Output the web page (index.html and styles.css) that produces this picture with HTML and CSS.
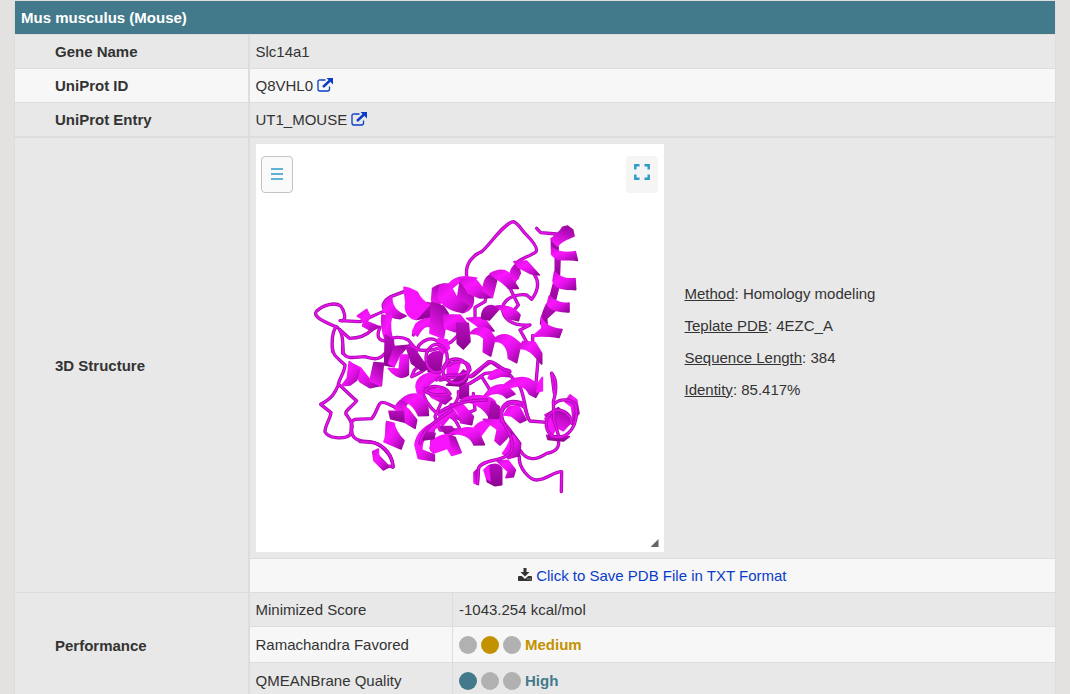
FILE: index.html
```html
<!DOCTYPE html>
<html lang="en">
<head>
    <meta charset="UTF-8">
    <meta name="viewport" content="width=device-width, initial-scale=1.0">
    <title>Mus musculus (Mouse) - Slc14a1</title>
    <link rel="stylesheet" href="styles.css">
</head>
<body>
    <!-- shared icons -->
    <svg class="sprite" aria-hidden="true">
        <symbol id="icon-external" viewBox="0 0 16 15">
            <path d="M8.500 2H3.500A2 2 0 0 0 1 4.500V11a2 2 0 0 0 2 2h7.500a2 2 0 0 0 2-2V8.500" fill="none" stroke="currentColor" stroke-width="1.300"/>
            <path d="M6 9L13 2.500" stroke="currentColor" stroke-width="2.400"/>
            <path d="M9.500 0H16v6.500z" fill="currentColor"/>
        </symbol>
    </svg>

    <table class="protein-table">
        <colgroup>
            <col class="col-label">
            <col class="col-name">
            <col>
        </colgroup>
        <thead>
            <tr>
                <th class="species" colspan="3">Mus musculus (Mouse)</th>
            </tr>
        </thead>
        <tbody>
            <tr>
                <th scope="row">Gene Name</th>
                <td class="first" colspan="2">Slc14a1</td>
            </tr>
            <tr class="light">
                <th scope="row">UniProt ID</th>
                <td class="first" colspan="2">Q8VHL0 <a href="#" aria-label="Open Q8VHL0"><svg class="icon-external"><use href="#icon-external"/></svg></a></td>
            </tr>
            <tr>
                <th scope="row">UniProt Entry</th>
                <td class="first" colspan="2">UT1_MOUSE <a href="#" aria-label="Open UT1_MOUSE"><svg class="icon-external"><use href="#icon-external"/></svg></a></td>
            </tr>
            <tr class="structure-row">
                <th scope="row" rowspan="2">3D Structure</th>
                <td class="first" colspan="2">
                    <div class="structure">
                        <div class="viewer">
                            <div class="viewer-tools">
                                <button class="tool tool-menu" type="button" aria-label="Menu">
                                    <svg width="12" height="12" viewBox="0 0 12 12"><path d="M0 1h12M0 6h12M0 11h12" stroke="#2b9cc8" stroke-width="1.500"/></svg>
                                </button>
                                <button class="tool" type="button" aria-label="Full screen">
                                    <svg width="16" height="16" viewBox="0 0 16 16"><path d="M1.300 5.500V1.300H5.500M10.500 1.300h4.200V5.500M14.700 10.500v4.200H10.500M5.500 14.700H1.300V10.500" fill="none" stroke="#2b9cc8" stroke-width="2.400"/></svg>
                                </button>
                            </div>
                            <svg class="model" viewBox="0 0 1224 1224" role="img" aria-label="3D model">
                                <defs>
                                    <linearGradient id="g1" x1="0" y1="0" x2="1" y2="1">
                                        <stop offset="0" stop-color="#d00ed6"/>
                                        <stop offset="0.350" stop-color="#fb16ff"/>
                                        <stop offset="0.600" stop-color="#e010e6"/>
                                        <stop offset="1" stop-color="#8e0694"/>
                                    </linearGradient>
                                    <linearGradient id="g2" x1="0" y1="1" x2="0.500" y2="0">
                                        <stop offset="0" stop-color="#ff1cff"/>
                                        <stop offset="0.500" stop-color="#d40fda"/>
                                        <stop offset="1" stop-color="#a009a6"/>
                                    </linearGradient>
                                    <linearGradient id="g3" x1="0" y1="0" x2="0" y2="1">
                                        <stop offset="0" stop-color="#b80bbe"/>
                                        <stop offset="1" stop-color="#8c0592"/>
                                    </linearGradient>
                                    <g id="coil-back">
                                        <!-- left loops -->
                                        <g transform="translate(132 198)">
                                            <path d="M128 332C140 325 132 300 122 288C105 275 70 285 50 303C38 318 60 330 112 352"/>
                                            <path d="M120 332L180 335C210 325 230 310 255 303"/>
                                            <path d="M118 358L148 385C180 385 200 375 215 360"/>
                                            <path d="M108 350C95 370 95 400 98 425"/>
                                            <path d="M118 358C130 375 130 400 128 430"/>
                                            <path d="M255 300C240 285 258 265 280 257L312 245"/>
                                            <path d="M240 352C230 375 232 390 255 393C275 380 305 378 325 390L350 420"/>
                                        </g>
                                        <g transform="translate(132 588)">
                                            <path d="M97 20C95 45 115 55 135 75C135 95 120 110 115 132L170 183C150 205 130 215 140 225C155 245 160 260 155 270C155 300 180 305 210 305C240 310 275 340 280 380L262 378L235 350"/>
                                            <path d="M128 20L130 40C140 60 170 50 195 50C215 55 235 65 255 40"/>
                                            <path d="M115 135C105 160 95 175 62 193L93 218C90 240 75 255 75 275C85 295 130 300 150 285C160 265 145 245 165 238L215 236C230 220 235 185 247 187C265 188 280 200 300 210"/>
                                        </g>
                                        <!-- top loops -->
                                        <g transform="translate(522 198)">
                                            <path d="M320 55L332 68L380 72"/>
                                            <path d="M110 198C105 160 130 135 155 125C180 105 220 40 250 35C265 40 275 60 285 70C310 95 325 115 318 125C300 140 270 145 262 158L268 190L240 235L265 285L245 310"/>
                                            <path d="M312 192C325 210 330 235 305 268L290 255C260 250 225 265 218 290C215 320 240 350 300 345L270 360L295 405"/>
                                            <path d="M135 325L135 292L165 275L168 260"/>
                                            <path d="M308 400L308 376"/>
                                        </g>
                                        <!-- right loops -->
                                        <g transform="translate(522 588)">
                                            <path d="M324 60L318 130"/>
                                            <path d="M270 140C290 190 285 230 300 243L360 248"/>
                                            <path d="M385 300C390 325 375 335 350 340C320 360 290 365 270 330"/>
                                            <path d="M268 350C265 385 300 420 320 420C350 420 370 395 395 395L394 455"/>
                                            <path d="M125 110C150 95 165 70 185 67L240 105L270 140"/>
                                            <path d="M120 130L165 100L225 95"/>
                                        </g>
                                        <!-- core -->
                                        <g transform="translate(312 378)">
                                            <path d="M160 195C170 160 205 145 235 155"/>
                                            <path d="M150 225C170 245 200 245 235 235L275 215L300 190"/>
                                            <path d="M165 255C175 205 225 190 245 230C235 275 190 305 155 320C160 300 170 290 185 290"/>
                                            <path d="M190 375C200 400 225 435 250 435C280 410 300 390 295 365"/>
                                            <path d="M240 330L290 320L320 345L365 320L390 360L370 385"/>
                                            <path d="M245 395L225 440L240 480L300 480"/>
                                            <path d="M300 480C290 450 270 430 250 440C215 460 215 500 215 540"/>
                                            <path d="M340 370L345 420L320 430"/>
                                        </g>
                                    </g>
                                    <g id="coil-front">
                                        <g transform="translate(312 378)">
                                            <ellipse cx="230" cy="265" rx="32" ry="42"/>
                                            <ellipse cx="287" cy="303" rx="38" ry="36"/>
                                            <path d="M230 330C270 300 300 330 330 300C330 270 290 270 265 285"/>
                                            <path d="M195 362C215 340 260 350 270 372C240 375 215 380 195 362"/>
                                            <path d="M240 425C280 400 320 390 380 390"/>
                                            <path d="M330 320L385 275C405 270 420 300 450 305"/>
                                            <path d="M180 520C190 470 235 450 275 420"/>
                                            <path d="M425 455C415 400 445 385 490 400L505 445"/>
                                            <path d="M0 515L40 518C75 525 100 560 98 592"/>
                                        </g>
                                        <g transform="translate(522 588)">
                                            <path d="M365 100C382 120 380 150 370 185L372 240L385 285"/>
                                            <path d="M365 100L373 160"/>
                                            <path d="M375 190C390 175 430 175 438 200C445 250 420 300 370 290C335 270 345 215 385 210C415 215 425 235 425 250"/>
                                            <path d="M280 200C260 180 215 190 215 225C215 260 255 280 245 330C235 365 160 355 146 383L142 430"/>
                                        </g>
                                    </g>
                                </defs>

                                <g class="coil-dark"><use href="#coil-back"/></g>
                                <g class="coil-light"><use href="#coil-back"/></g>

                                <g class="ribbons">
                                    <!-- upper left helix -->
                                    <g transform="translate(132 198)">
                                        <path class="r1" d="M172 318L200 298L210 318L202 335L238 350L215 362L188 348L192 330Z"/>
                                        <path class="r1" d="M250 302C255 275 262 265 275 262C275 300 300 310 318 318L300 326C280 325 265 320 250 302Z"/>
                                        <path class="r3" d="M380 278L430 288L445 312L405 318L350 328Z"/>
                                        <path class="r4" d="M312 232L330 236L352 247C360 265 370 275 388 285L348 328C325 325 312 300 318 280Z"/>
                                        <path class="r1" d="M246 315L275 318C265 350 275 380 285 420L262 425C262 390 240 370 246 315Z"/>
                                    </g>
                                    <g transform="translate(312 378)">
                                        <path class="r3" d="M76 195L100 210L102 290L74 285Z"/>
                                        <path class="r2" d="M104 230L145 226L118 258L102 290L86 280Z"/>
                                        <path class="r1" d="M122 255L145 255L145 314C130 328 105 322 85 295L118 298Z"/>
                                        <path class="r3" d="M138 228L165 240L190 275L215 290L185 302L155 280Z"/>
                                        <path class="r1" d="M-30 278L2 294L30 330L62 346L30 353L0 335L-18 300Z"/>
                                        <path class="r2" d="M42 278L70 280L64 348L30 332Z"/>
                                        <path class="r1" d="M-32 275L-2 300L-10 330L-30 345L-55 347L-38 325Z"/>
                                    </g>

                                    <!-- upper helix -->
                                    <g transform="translate(312 378)">
                                        <path class="r2" d="M218 55C235 42 260 38 270 48C255 75 245 95 232 112L215 92Z"/>
                                        <path class="r1" d="M262 48C280 20 310 15 350 25L335 35L300 35L275 55Z"/>
                                        <path class="r2" d="M300 38L338 72C345 100 335 125 305 128L290 100Z"/>
                                        <path class="r1" d="M240 45L268 42L292 85L325 108L310 127C275 125 245 105 232 80Z"/>
                                        <path class="r1" d="M300 28C330 20 350 25 360 45L397 82L360 84L325 70C315 50 305 40 300 28Z"/>
                                        <path class="r2" d="M370 62C370 30 380 15 400 12L410 30L397 82Z"/>
                                        <path class="r1" d="M390 12C410 0 430 -2 445 8L475 55L445 55C430 35 412 28 390 12Z"/>
                                        <path class="r2" d="M450 12C455 -10 468 -20 480 -22L475 25L465 32Z"/>
                                        <path class="r1" d="M462 -25L500 -27L538 15L510 10L475 -8Z"/>
                                    </g>

                                    <!-- second helix -->
                                    <g transform="translate(312 378)">
                                        <path class="r1" d="M168 162C190 142 220 140 230 155L245 180L225 180C205 160 190 165 172 198L158 185Z"/>
                                        <path class="r2" d="M215 98L240 105L262 135L250 205L210 190Z"/>
                                        <path class="r1" d="M250 135L300 135L320 160L322 180L285 185L255 175Z"/>
                                        <path class="r3" d="M290 160L325 160L330 215L310 237L292 220Z"/>
                                        <path class="r1" d="M320 145L370 142L402 183L372 182Z"/>
                                        <path class="r3" d="M365 145C365 122 375 108 395 107L420 114L388 150Z"/>
                                        <path class="r1" d="M330 190C345 172 365 168 388 180L405 205L392 258L370 245L372 205C355 190 345 190 330 190Z"/>
                                        <path class="r1" d="M402 215C405 192 440 188 462 205L482 222L470 278L445 265C445 235 430 210 402 215Z"/>
                                        <path class="r1" d="M480 235L488 215L525 217L545 250L545 282C525 260 510 235 480 235Z"/>
                                        <path class="r1" d="M410 108C440 105 465 115 480 135L475 152L440 144L430 125Z"/>
                                        <path class="r4" d="M235 205L262 210L268 235L250 250L235 235Z"/>
                                    </g>

                                    <!-- core -->
                                    <g transform="translate(312 378)">
                                        <path class="r3" d="M200 270C210 245 230 240 248 252L240 310L205 305Z"/>
                                        <path class="r1" d="M168 350C170 320 200 305 240 308L240 325C215 330 200 345 192 378L172 368Z"/>
                                        <path class="r1" d="M192 352L250 360L275 385L255 402L215 382Z"/>
                                        <path class="r3" d="M300 350L325 345L325 382L300 385Z"/>
                                        <path class="r4" d="M262 278L300 280L290 315L262 322Z"/>
                                        <path class="r3" d="M310 300C330 310 330 335 300 348L260 345L290 325Z"/>
                                        <path class="r1" d="M385 325C392 298 425 290 450 300L448 320L425 318L395 328Z"/>
                                        <path class="r1" d="M378 380C385 348 420 340 440 347L465 372L440 384C425 365 400 365 378 380Z"/>
                                        <path class="r1" d="M428 350C450 322 490 318 510 328L545 350L527 382L508 372C498 348 480 342 455 352Z"/>
                                        <path class="r4" d="M535 340L547 322L547 362L530 366Z"/>
                                    </g>

                                    <!-- lower helices -->
                                    <g transform="translate(312 378)">
                                        <path class="r2" d="M105 418C110 388 145 378 170 376L140 402L130 425Z"/>
                                        <path class="r1" d="M125 388C145 372 165 370 180 375L203 405L205 436L176 437C165 410 150 400 125 388Z"/>
                                        <path class="r1" d="M122 400L145 418L170 450L165 475L132 455Z"/>
                                        <path class="r3" d="M87 424L130 425L132 456L92 446Z"/>
                                        <path class="r1" d="M80 455L102 460C105 485 120 500 132 512L123 537L72 515C82 495 75 475 80 455Z"/>
                                        <path class="r1" d="M38 545L55 537C52 560 65 580 85 592L70 600L42 572Z"/>
                                        <path class="r1" d="M300 392C330 370 390 375 405 395L420 440L388 442C370 410 340 395 300 392Z"/>
                                        <path class="r3" d="M395 395L418 410L415 465L385 455Z"/>
                                        <path class="r1" d="M270 402L305 400L340 440L335 464L302 458C300 430 290 415 270 402Z"/>
                                        <path class="r1" d="M235 430L275 410L300 450L270 440L245 470Z"/>
                                        <path class="r3" d="M240 470L275 470L290 490L262 498Z"/>
                                        <path class="r4" d="M332 490C350 455 370 450 395 455L360 500Z"/>
                                        <path class="r3" d="M420 440L445 470L482 520L478 558L445 562L460 515L425 475Z"/>
                                        <path class="r1" d="M370 448L425 450L452 480L440 505L420 525L405 512L412 478Z"/>
                                        <path class="r1" d="M270 490C310 470 340 468 355 485L373 524L342 525C335 505 320 490 270 490Z"/>
                                        <path class="r4" d="M215 515C235 495 260 492 275 495L303 548L275 556L262 535L220 550L210 535Z"/>
                                        <path class="r2" d="M268 498L285 502L303 546L280 552Z"/>
                                        <path class="r1" d="M165 525C168 490 200 460 240 455L238 468C205 485 185 505 185 540L223 555L223 573L175 565Z"/>
                                        <path class="r3" d="M190 485L225 490L222 505L190 510Z"/>
                                        <path class="r1" d="M432 435L445 412L475 405L498 450L480 458L455 438Z"/>
                                    </g>

                                    <!-- right helix -->
                                    <g transform="translate(522 198)">
                                        <path class="r3" d="M364 85L384 100L384 132L365 118Z"/>
                                        <path class="r2" d="M364 88C375 72 390 70 398 52L412 48L428 60L432 78C415 85 395 90 382 108Z"/>
                                        <path class="r3" d="M376 145L390 150L388 200L376 195Z"/>
                                        <path class="r1" d="M365 112C390 132 415 128 436 125L442 151C415 145 382 158 365 133Z"/>
                                        <path class="r3" d="M370 222L386 232L374 280L358 270Z"/>
                                        <path class="r1" d="M374 185C390 207 415 208 435 206L437 239C410 236 374 240 369 212Z"/>
                                        <path class="r3" d="M350 282L378 300L350 325L352 355L332 342C332 320 340 305 350 282Z"/>
                                        <path class="r1" d="M358 258C375 278 400 282 417 279L417 306C390 303 365 304 352 282Z"/>
                                        <path class="r1" d="M334 322C345 350 370 357 396 359L387 382C360 378 330 375 308 380L336 355Z"/>
                                    </g>

                                    <!-- right and bottom clusters -->
                                    <g transform="translate(522 588)">
                                        <path class="r2" d="M345 225L385 203L425 245L400 272L365 255Z"/>
                                        <path class="r1" d="M420 165L440 180L447 220L430 242L425 200L405 185Z"/>
                                        <path class="r3" d="M350 286L418 290L400 303L354 298Z"/>
                                        <path class="r4" d="M345 235L360 235L375 270L365 290L355 260Z"/>
                                        <path class="r1" d="M218 340C235 320 240 300 248 285L270 312L268 345L235 356Z"/>
                                        <path class="r2" d="M132 398L148 382L145 434L132 428Z"/>
                                        <path class="r3" d="M165 388C180 368 205 370 215 385L215 434L195 437L172 425Z"/>
                                        <path class="r1" d="M200 362L235 362L256 390L250 410L228 413L235 395Z"/>
                                        <path class="r4" d="M162 390L175 378L180 422L170 415Z"/>
                                    </g>
                                </g>

                                <g class="coil-dark"><use href="#coil-front"/></g>
                                <g class="coil-light"><use href="#coil-front"/></g>
                            </svg>
                            <span class="resize-grip"></span>
                        </div>
                        <div class="model-info">
                            <p><u>Method</u>: Homology modeling</p>
                            <p><u>Teplate PDB</u>: 4EZC_A</p>
                            <p><u>Sequence Length</u>: 384</p>
                            <p><u>Identity</u>: 85.417%</p>
                        </div>
                    </div>
                </td>
            </tr>
            <tr class="light">
                <td class="first download" colspan="2">
                    <svg class="icon-download" viewBox="0 0 14 13"><path d="M5.500 0h3v4H11.500L7 8.500 2.500 4H5.500z"/><path d="M1 8h2.800L7 11l3.200-3H13a1 1 0 0 1 1 1v3a1 1 0 0 1-1 1H1a1 1 0 0 1-1-1V9a1 1 0 0 1 1-1z"/><path d="M9.500 11h1M11.700 11h1" stroke="#f7f7f7"/></svg>
                    <a href="#">Click to Save PDB File in TXT Format</a>
                </td>
            </tr>
            <tr>
                <th scope="row" rowspan="3">Performance</th>
                <td class="first">Minimized Score</td>
                <td>-1043.254 kcal/mol</td>
            </tr>
            <tr class="light">
                <td class="first">Ramachandra Favored</td>
                <td>
                    <div class="rating medium"><i></i><i class="on"></i><i></i><b>Medium</b></div>
                </td>
            </tr>
            <tr>
                <td class="first">QMEANBrane Quality</td>
                <td>
                    <div class="rating high"><i class="on"></i><i></i><i></i><b>High</b></div>
                </td>
            </tr>
        </tbody>
    </table>
</body>
</html>
```
FILE: styles.css
```css
:root {
    --bg-color: #e3e2e0;
    --row-color: #e8e8e8;
    --row-light: #f7f7f7;
    --border-color: #dddddd;
    --text-color: #333333;
    --link-color: #0a3cc8;
    --teal: #437a8b;
    --gold: #c29200;
}

* {
    box-sizing: border-box;
}

html {
    scrollbar-width: none;
}

body {
    margin: 0;
    padding: 0 14px;
    background: var(--bg-color);
    color: var(--text-color);
    font-family: "Liberation Sans", Arial, Helvetica, sans-serif;
    font-size: 15px;
    line-height: 21px;
}

a {
    color: var(--link-color);
    text-decoration: none;
}

.sprite {
    position: absolute;
    width: 0;
    height: 0;
}

/* table */
.protein-table {
    width: 100%;
    table-layout: fixed;
    border-collapse: collapse;
}

.col-label {
    width: 234px;
}

.col-name {
    width: 204px;
}

.protein-table th,
.protein-table td {
    padding: 6px;
    border: 1px solid var(--border-color);
    background: var(--row-color);
    text-align: left;
}

.protein-table th {
    padding-left: 40px;
}

.protein-table .first {
    border-left-width: 2px;
}

.protein-table .light th,
.protein-table .light td {
    background: var(--row-light);
}

.protein-table .species {
    padding-left: 6px;
    background: var(--teal);
    color: #ffffff;
}

.structure-row th,
.structure-row td {
    border-top-width: 2px;
}

.protein-table .download {
    text-align: center;
}

.icon-external {
    width: 16px;
    height: 15px;
    vertical-align: -2px;
}

.icon-download {
    width: 14px;
    height: 13px;
    fill: var(--text-color);
}

/* 3D viewer */
.structure {
    display: flex;
    align-items: center;
    gap: 21px;
}

.viewer {
    position: relative;
    flex: 0 0 408px;
    aspect-ratio: 1;
    background: #ffffff;
}

.viewer-tools {
    position: absolute;
    top: 12px;
    left: 5px;
    right: 6px;
    display: flex;
    justify-content: space-between;
}

.tool {
    display: flex;
    justify-content: center;
    align-items: center;
    width: 32px;
    height: 37px;
    padding: 0 0 5px;
    border: none;
    border-radius: 4px;
    background: #f5f5f5;
    cursor: pointer;
}

.tool-menu {
    padding: 0 0 2px;
    border: 1px solid #c4c4c4;
    background: #fafafa;
}

.model {
    display: block;
    width: 100%;
    height: 100%;
}

.coil-dark,
.coil-light {
    fill: none;
    stroke-linecap: round;
    stroke-linejoin: round;
}

.coil-dark {
    stroke: #a60aac;
    stroke-width: 10;
}

.coil-light {
    stroke: #e812ee;
    stroke-width: 5;
}

.ribbons {
    stroke-width: 5;
    stroke-linejoin: round;
}

.r1 {
    fill: url(#g1);
    stroke: url(#g1);
}

.r2 {
    fill: url(#g2);
    stroke: url(#g2);
}

.r3 {
    fill: url(#g3);
    stroke: url(#g3);
}

.r4 {
    fill: #f714fb;
    stroke: #f714fb;
}

.resize-grip {
    position: absolute;
    right: 5px;
    bottom: 5px;
    width: 8px;
    height: 8px;
    background: #666666;
    clip-path: polygon(100% 0, 100% 100%, 0 100%);
}

.model-info {
    padding-bottom: 3px;
}

.model-info p {
    margin: 0 0 11px;
}

/* performance */
.rating {
    display: flex;
    align-items: center;
    gap: 4px;
    height: 23px;
}

.rating i {
    width: 18px;
    height: 18px;
    border-radius: 50%;
    background: #b1b1b1;
}

.medium {
    color: var(--gold);
}

.high {
    color: var(--teal);
}

.rating .on {
    background: currentColor;
}
```
